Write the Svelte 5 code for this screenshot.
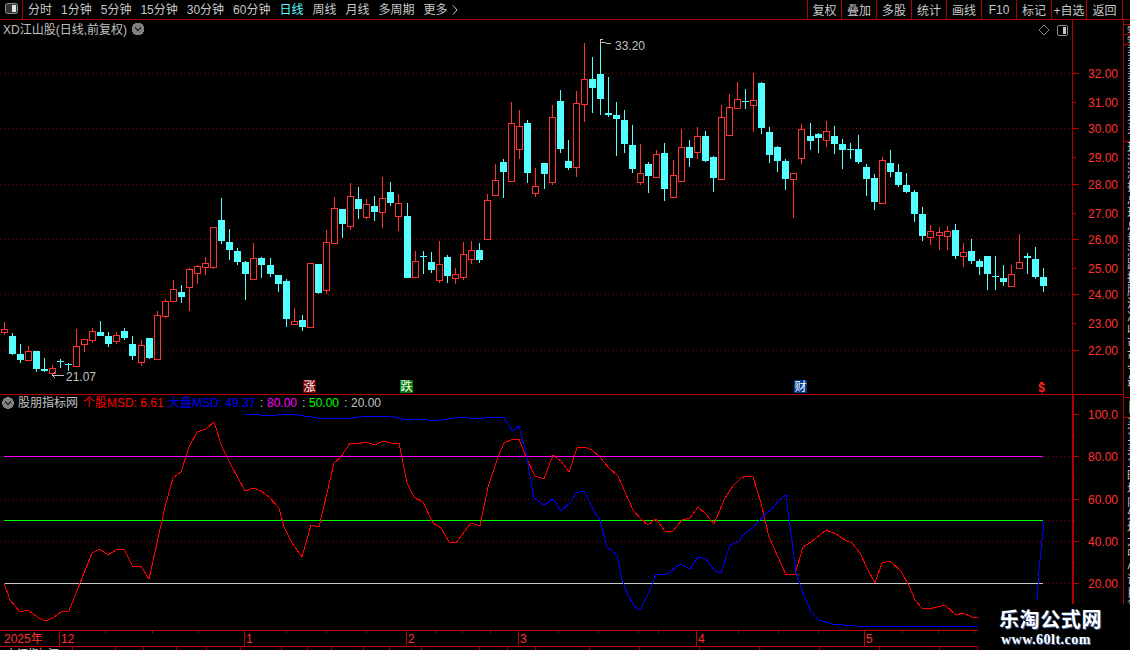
<script>
  const parseGroup = (x0, y0, src) =>
    src.trim().split('\n').map((l) => {
      const [x, c, t, b, wt, wb] = l.trim().split(' ');
      const y = (v) => Math.round(y0 + Number(v) / 3);
      return { x: Math.floor(x0 + Number(x) / 3), up: c === 'r', t: y(t), b: y(b), wt: y(wt), wb: y(wb) };
    });

  const candles = [
    ...parseGroup(0, 180, `13 r 448 455 426 465
37 c 468 522 460 525
61 c 522 540 492 549
85 r 514 539 498 540
109 c 513 567 513 576
133 c 567 573 534 576
157 r 565 578 555 580
181 c 543 545 537 564
205 c 553 555 549 573
229 r 499 557 447 561
253 r 478 491 478 516
277 r 454 479 444 489
301 c 456 468 423 468
325 c 468 492 456 501
349 r 466 483 456 492
373 c 453 474 444 480
397 c 492 528 468 540
424 r 496 545 480 558
448 c 474 534 474 537
472 r 406 536 393 540
496 r 364 407 357 414
520 r 328 362 300 363
544 c 336 351 315 369
568 r 268 320 264 393
592 r 259 278 255 312
616 r 250 260 231 285
640 r 142 260 142 267
664 c 120 183 54 192
688 c 186 210 147 240
712 c 213 246 204 255
736 c 246 282 243 360
760 r 235 296 189 300
784 c 234 255 231 294
811 c 255 282 234 291
835 c 285 312 285 336
859 c 303 417 297 441
883 r 424 431 384 435
907 c 420 441 405 453
931 r 250 440 250 444
955 c 252 339 252 342
979 r 187 329 150 342
1003 r 85 188 51 188`),
    ...parseGroup(300, 30, `127 c 537 582 537 624
151 r 499 587 459 600
175 c 507 537 471 567
199 r 523 560 507 567
223 c 528 546 498 573
247 r 505 545 441 594
271 c 486 519 456 528
295 r 520 557 492 603
322 c 558 744 519 744
346 r 694 740 663 740
370 c 678 681 663 732
394 c 696 720 666 729
418 r 703 749 633 759
442 c 681 738 675 759
466 r 733 743 714 762
490 r 673 740 636 750
514 r 661 686 633 702
538 c 660 690 639 699
562 r 511 626 492 626
586 r 451 494 402 497
610 c 396 426 387 504
634 r 280 452 216 456
658 r 289 356 240 387
682 c 279 429 270 459
706 r 469 488 414 501
733 c 399 432 399 477
757 r 262 455 225 465
781 c 213 357 180 369
805 c 393 414 330 420
829 r 220 410 183 441
853 r 148 221 39 276
877 c 147 174 81 249
901 c 132 207 36 255
925 c 249 255 141 261
949 c 255 267 216 378
973 c 270 342 240 369
997 c 345 417 285 429
1021 r 430 455 342 465
1045 c 402 438 396 489
1069 r 373 440 360 444`),
    ...parseGroup(640, 60, `73 c 279 387 249 423
100 r 346 410 300 414
124 r 262 362 207 362
148 c 261 294 240 321
172 r 229 275 201 297
196 c 228 303 213 306
220 c 291 354 288 396
244 r 172 356 135 356
268 r 142 224 102 224
292 r 118 143 66 147
316 c 123 126 87 147
340 r 121 136 39 216
364 c 69 204 66 222
388 c 216 285 201 309
412 c 261 303 258 336
436 c 303 357 297 390
460 r 340 356 340 474
484 r 208 293 192 312
511 c 228 243 189 270
535 c 222 234 219 279
559 r 214 239 183 261
583 c 228 252 198 282
607 c 252 270 237 327
631 c 267 270 249 297
655 c 267 306 225 312
679 c 321 357 312 408
703 c 354 426 342 450
727 r 301 428 291 428
751 c 309 336 270 351
775 c 336 375 312 381
799 c 375 396 339 399
823 c 396 462 390 486
847 c 462 528 441 543
871 r 514 530 495 555
898 r 517 524 501 570
922 r 514 527 498 570
946 c 510 588 492 597
970 r 577 587 549 621
994 c 573 603 537 612
1018 c 603 621 597 645
1042 c 588 642 588 690
1066 c 648 651 588 690
1090 c 654 666 615 678
1114 r 643 677 615 681
1138 r 607 623 522 627
1162 c 588 594 579 642
1186 c 597 651 561 657
1210 c 651 678 624 696`)
  ];

  const toPts = (arr) =>
    arr.map(([x, y]) => `${Math.round(x / 1.479)},${Math.round(400 + y / 3)}`).join(' ');

  const msd = toPts([[6,548],[15,600],[30,636],[42,630],[55,650],[66,664],[78,655],[90,637],[102,632],[118,550],[136,460],[148,448],[160,466],[172,450],[184,448],[196,500],[208,498],[220,536],[232,430],[244,320],[256,235],[268,216],[280,140],[292,96],[304,88],[316,66],[328,140],[340,190],[352,235],[362,272],[374,265],[386,272],[398,292],[412,325],[420,380],[432,430],[446,470],[460,376],[472,380],[484,280],[494,190],[504,170],[518,130],[528,132],[542,127],[554,135],[566,124],[578,130],[590,130],[602,250],[612,292],[626,306],[640,368],[652,385],[664,425],[674,430],[696,370],[710,378],[722,260],[736,170],[745,130],[758,118],[768,118],[778,170],[792,228],[804,238],[818,164],[830,182],[842,215],[854,145],[864,142],[876,150],[888,170],[900,205],[914,228],[936,330],[948,358],[958,376],[970,358],[984,394],[996,394],[1008,360],[1020,355],[1032,322],[1044,342],[1056,372],[1072,295],[1084,258],[1096,234],[1104,229],[1114,232],[1126,310],[1138,410],[1150,470],[1162,525],[1176,522],[1188,440],[1200,425],[1222,389],[1236,402],[1250,420],[1260,430],[1272,460],[1284,510],[1294,548],[1304,488],[1316,484],[1332,512],[1344,558],[1354,600],[1364,625],[1380,625],[1398,616],[1414,644],[1424,638],[1438,650],[1447,652]]);

  const market = toPts([[362,42],[385,44],[410,44],[430,43],[450,48],[470,55],[520,55],[530,51],[580,48],[600,60],[622,57],[645,62],[680,52],[705,56],[725,51],[745,51],[757,92],[768,78],[778,160],[790,295],[804,315],[818,298],[830,334],[844,305],[852,280],[864,272],[880,340],[887,360],[898,440],[912,465],[920,540],[928,580],[938,617],[946,630],[960,575],[970,522],[985,525],[1005,493],[1020,508],[1032,472],[1044,476],[1056,510],[1066,520],[1080,436],[1092,425],[1104,395],[1114,385],[1130,345],[1140,330],[1152,300],[1163,285],[1178,520],[1190,595],[1200,635],[1212,660],[1230,672],[1265,679],[1447,680]]);

  const periods = ['分时','1分钟','5分钟','15分钟','30分钟','60分钟','日线','周线','月线','多周期'];
  const tools = ['复权','叠加','多股','统计','画线','F10','标记','+自选','返回'];

  const priceGrid = [73, 128, 184, 239, 294, 350];
  const priceLabels = [[73,'32.00',1],[102,'31.00',0],[128,'30.00',1],[157,'29.00',0],[184,'28.00',1],[213,'27.00',0],[239,'26.00',1],[268,'25.00',0],[294,'24.00',1],[323,'23.00',0],[350,'22.00',1]];
  const indLabels = [[414,'100.0'],[456,'80.00'],[499,'60.00'],[541,'40.00'],[583,'20.00']];
  const indMinor = [435, 478, 520, 562];
  const levels = [[456,'#ff00ff'],[520,'#00ff00'],[583,'#c8c8c8']];
  const months = [[59,'12'],[244,'1'],[406,'2'],[518,'3'],[696,'4'],[864,'5']];
  const dateTicks = [105,152,198,286,326,366,435,462,490,558,598,638,658,738,778,818,902,938,974];
  const statusStops = [42,73,116,144,177,207,241,282,308,332,364,390,422,480,508,536,590,640,700,760,820,880,940,978];
  const statusCells = statusStops.map((s, i) => s - (i ? statusStops[i - 1] : 0));
  const sideGroups = [
    { h: 5, rows: [] },
    { h: 10, rows: ['委比'], tight: true },
    { h: 10, rows: ['委差'], tight: true },
    { h: 97, rows: ['卖五','卖四','卖三','卖二','卖一','买一','买二'] },
    { h: 256, rows: ['现价','涨跌','涨幅','振幅','总手','现手','总额','量比','涨停','跌停','换手','股本','流通','净资','收益','市盈','市净','今开','最高'] },
    { h: 20, rows: ['日'], mark: true },
    { h: 232, rows: ['买','1','买','1','昨收','均价','内盘','外盘','均量','大单','中单','小单','评级','目标','行业','地区','概念'] }
  ];
</script>

<div class="screen">
  <header class="toolbar">
    <div class="panel-toggle">
      <svg width="14" height="12" viewBox="0 0 14 12"><rect x="0.5" y="0.5" width="12" height="10" rx="2" fill="#333" stroke="#8c8c8c"/><rect x="7" y="2" width="4" height="7" fill="#e0e0e0"/></svg>
    </div>
    <nav class="periods">
      {#each periods as p}
        <span class:active={p === '日线'}>{p}</span>
      {/each}
      <span class="more">更多
        <svg width="6" height="10" viewBox="0 0 6 10"><path d="M1 0.5 5 5 1 9.5" fill="none" stroke="#c8c8c8"/></svg>
      </span>
    </nav>
    <div class="tools">
      {#each tools as t}
        <button>{t}</button>
      {/each}
    </div>
  </header>

  <div class="workspace">
    <main class="charts">
      <section class="pane price">
        <div class="plot">
          <svg width="1072" height="374" viewBox="0 20 1072 374" shape-rendering="crispEdges">
            <defs>
              <pattern id="dots" width="4" height="1" patternUnits="userSpaceOnUse">
                <rect width="1" height="1" fill="#8a0000" />
              </pattern>
            </defs>
            {#each priceGrid as y}
              <rect x="0" y={y} width="1072" height="1" fill="url(#dots)" />
            {/each}
            {#each candles as c}
              <rect x={c.x} y={c.wt} width="1" height={c.wb - c.wt} fill={c.up ? '#ff3232' : '#54ffff'} />
              {#if c.up}
                <rect x={c.x - 3 + 0.5} y={c.t + 0.5} width="6" height={Math.max(c.b - c.t, 2)} fill="#000" stroke="#ff3232" />
              {:else}
                <rect x={c.x - 3} y={c.t} width="7" height={Math.max(c.b - c.t, 1)} fill="#54ffff" />
              {/if}
            {/each}
            <text x="3" y="34" class="title">XD江山股(日线,前复权)</text>
            <g transform="translate(138 29)">
              <circle r="6.5" fill="#808080" />
              <path d="M-3 -1.5 0 1.5 3 -1.5" fill="none" stroke="#222" stroke-width="1.3" shape-rendering="auto" />
            </g>
            <path d="M1044 25 1049 30 1044 35 1039 30Z" fill="none" stroke="#808080" shape-rendering="auto" />
            <g transform="translate(1057 25)">
              <rect x="0.5" y="0.5" width="10" height="10" rx="2" fill="#000" stroke="#8c8c8c" />
              <rect x="6" y="2" width="3" height="7" fill="#c8c8c8" />
            </g>
            <g class="extreme">
              <path d="M600 39V46M600 39H603M600 42 606 43H611" fill="none" stroke="#c0c0c0" />
              <text x="615" y="50">33.20</text>
              <path d="M64 375H52M52 375 55 372M52 375 55 378" fill="none" stroke="#c0c0c0" />
              <text x="66" y="381">21.07</text>
            </g>
            <g class="badge">
              <rect x="303" y="380" width="13" height="13" fill="#7a0000" />
              <text x="309.5" y="391">涨</text>
              <rect x="400" y="380" width="13" height="13" fill="#007a00" />
              <text x="406.5" y="391">跌</text>
              <rect x="794" y="380" width="13" height="13" fill="#003c8c" />
              <text x="800.5" y="391">财</text>
              <rect x="1040" y="382" width="3" height="1" fill="#ff2020" />
              <text x="1041.5" y="392" class="dollar">$</text>
            </g>
          </svg>
        </div>
        <div class="axis">
          <svg width="50" height="374" viewBox="1073 20 50 374" shape-rendering="crispEdges">
            {#each priceLabels as [y, label, major]}
              <line x1="1073" x2={major ? 1079 : 1076} y1={y + 0.5} y2={y + 0.5} class="tick" />
              <text x="1118" y={y + 5} class="axis-label">{label}</text>
            {/each}
          </svg>
        </div>
      </section>

      <section class="pane indicator">
        <div class="plot">
          <svg width="1072" height="235" viewBox="0 395 1072 235" shape-rendering="crispEdges">
            {#each [499, 541] as y}
              <rect x="0" y={y} width="1072" height="1" fill="url(#dots)" />
            {/each}
            {#each levels as [y, color]}
              <rect x="4" y={y} width="1039" height="1" fill={color} />
              <rect x="1043" y={y} width="29" height="1" fill="url(#dots)" />
            {/each}
            <polyline points={msd} fill="none" stroke="#ff0000" />
            <polyline points={market} fill="none" stroke="#0000ff" />
            <polyline points="1037,600 1039,570 1044,521" fill="none" stroke="#0000ff" />
            <g transform="translate(8 403)">
              <circle r="6" fill="#808080" />
              <path d="M-3 -1.5 0 1.5 3 -1.5" fill="none" stroke="#222" stroke-width="1.3" shape-rendering="auto" />
            </g>
            <text x="18" y="407" class="legend">
              <tspan fill="#c0c0c0">股朋指标网</tspan>
              <tspan x="83" fill="#ff0000">个股MSD: 6.61</tspan>
              <tspan x="168" fill="#0000ff">大盘MSD: 49.37</tspan>
              <tspan x="260" fill="#c0c0c0">:</tspan>
              <tspan x="267" fill="#ff00ff">80.00</tspan>
              <tspan x="302" fill="#c0c0c0">:</tspan>
              <tspan x="309" fill="#00ff00">50.00</tspan>
              <tspan x="344" fill="#c0c0c0">:</tspan>
              <tspan x="351" fill="#c0c0c0">20.00</tspan>
            </text>
          </svg>
        </div>
        <div class="axis thick">
          <svg width="49" height="235" viewBox="1074 395 49 235" shape-rendering="crispEdges">
            {#each indLabels as [y, label]}
              <line x1="1074" x2="1079" y1={y + 0.5} y2={y + 0.5} class="tick" />
              <text x="1118" y={y + 5} class="axis-label">{label}</text>
            {/each}
            {#each indMinor as y}
              <line x1="1074" x2="1075" y1={y + 0.5} y2={y + 0.5} class="tick" />
            {/each}
          </svg>
        </div>
      </section>

      <div class="dates">
        <svg width="1122" height="15" viewBox="0 631 1122 15" shape-rendering="crispEdges">
          <text x="4" y="643" class="date">2025年</text>
          {#each months as [x, m]}
            <line x1={x + 0.5} x2={x + 0.5} y1="631" y2="646" class="tick" />
            <text x={x + 2} y="643" class="date">{m}</text>
          {/each}
          {#each dateTicks as x}
            <line x1={x + 0.5} x2={x + 0.5} y1="631" y2="633" class="tick" />
          {/each}
        </svg>
      </div>

      <footer class="status">
        {#each statusCells as w, i}
          <span class="cell" style="width:{w}px">{i === 0 ? '上证指数' : i === 1 ? '深' : ''}</span>
        {/each}
      </footer>
    </main>

    <aside class="side">
      {#each sideGroups as g}
        <div class="side-group" class:mark={g.mark} class:tight={g.tight} style="height:{g.h}px">
          {#each g.rows as r}
            <div class="side-row">{r}</div>
          {/each}
        </div>
      {/each}
    </aside>
  </div>

  <div class="brand">
    <strong>乐淘公式网</strong>
    <em>www.60lt.com</em>
  </div>
</div>

<style>
  :global(body) {
    margin: 0;
    background: #000;
  }
  .screen {
    position: relative;
    width: 1130px;
    height: 650px;
    overflow: hidden;
    display: flex;
    flex-direction: column;
    background: #000;
    color: #c8c8c8;
    font: 12px "Liberation Sans", "Noto Sans CJK SC", sans-serif;
  }
  svg {
    display: block;
    font-family: "Liberation Sans", "Noto Sans CJK SC", sans-serif;
    font-size: 12px;
  }
  .toolbar {
    height: 19px;
    flex: none;
    display: flex;
    align-items: stretch;
    border-bottom: 1px solid #b00000;
    padding-right: 7px;
  }
  .panel-toggle {
    width: 23px;
    box-sizing: border-box;
    padding: 3px 0 0 5px;
    border-right: 1px solid #b00000;
  }
  .periods {
    flex: 1;
    display: flex;
    align-items: center;
    gap: 9px;
    padding: 1px 0 0 5px;
    line-height: 18px;
  }
  .periods .active {
    color: #54ffff;
  }
  .more {
    display: inline-flex;
    align-items: center;
    gap: 4px;
  }
  .tools {
    display: flex;
    border-left: 1px solid #b00000;
  }
  .tools button {
    width: 35px;
    box-sizing: border-box;
    padding: 0;
    border: 0;
    border-right: 1px solid #b00000;
    background: none;
    color: #c8c8c8;
    font: inherit;
    white-space: nowrap;
  }
  .tools button:first-child {
    width: 34px;
  }
  .tools button:last-child {
    width: 36px;
  }
  .workspace {
    flex: 1;
    min-height: 0;
    display: flex;
  }
  .charts {
    width: 1123px;
    flex: none;
    display: flex;
    flex-direction: column;
  }
  .pane {
    display: flex;
    border-bottom: 1px solid #b00000;
  }
  .price {
    height: 374px;
  }
  .indicator {
    height: 235px;
    border-bottom-color: #c00000;
  }
  .plot {
    width: 1072px;
    flex: none;
  }
  .axis {
    flex: 1;
    border-left: 1px solid #b00000;
  }
  .axis.thick {
    border-left-width: 2px;
  }
  .dates {
    height: 15px;
    flex: none;
    border-bottom: 1px solid #c00000;
  }
  .status {
    flex: 1;
    display: flex;
    overflow: hidden;
  }
  .cell {
    flex: none;
    box-sizing: border-box;
    border-right: 1px solid #b00000;
    padding: 1px 0 0 6px;
    color: #e0e0e0;
    font-size: 11px;
    line-height: 12px;
    white-space: nowrap;
    overflow: hidden;
  }
  .side {
    flex: 1;
    box-sizing: border-box;
    border-left: 1px solid #b00000;
    overflow: hidden;
  }
  .side-group {
    box-sizing: border-box;
    border-bottom: 1px solid #b00000;
    padding-left: 3px;
    overflow: hidden;
  }
  .side-group.mark {
    color: #e6e632;
  }
  .side-group.mark .side-row {
    line-height: 18px;
    height: 18px;
    font-size: 14px;
  }
  .side-group.tight .side-row {
    line-height: 9px;
    height: 9px;
    font-size: 9px;
  }
  .side-row {
    height: 13px;
    line-height: 13px;
    font-size: 12px;
    white-space: nowrap;
  }
  .tick {
    stroke: #c00000;
  }
  .title {
    fill: #c0c0c0;
  }
  .extreme text {
    fill: #c0c0c0;
  }
  .badge text {
    fill: #fff;
    text-anchor: middle;
    font-size: 12px;
  }
  .badge .dollar {
    fill: #ff2020;
    font-weight: bold;
    font-size: 12px;
  }
  .axis-label {
    fill: #ff3232;
    text-anchor: end;
  }
  .date {
    fill: #ff3232;
  }
  .brand {
    position: absolute;
    left: 978px;
    top: 604px;
    width: 152px;
    height: 46px;
    box-sizing: border-box;
    padding: 4px 0 0 21px;
    background: #000;
    display: flex;
    flex-direction: column;
    color: #fff;
    text-shadow: 1px 1px 0 #3a5a9c;
  }
  .brand strong {
    font: bold 20px/22px "Noto Sans CJK SC", sans-serif;
    letter-spacing: 0.6px;
  }
  .brand em {
    font: bold 14px/16px "Liberation Serif", serif;
    letter-spacing: 0.5px;
    margin: 2px 0 0 2px;
  }
</style>
